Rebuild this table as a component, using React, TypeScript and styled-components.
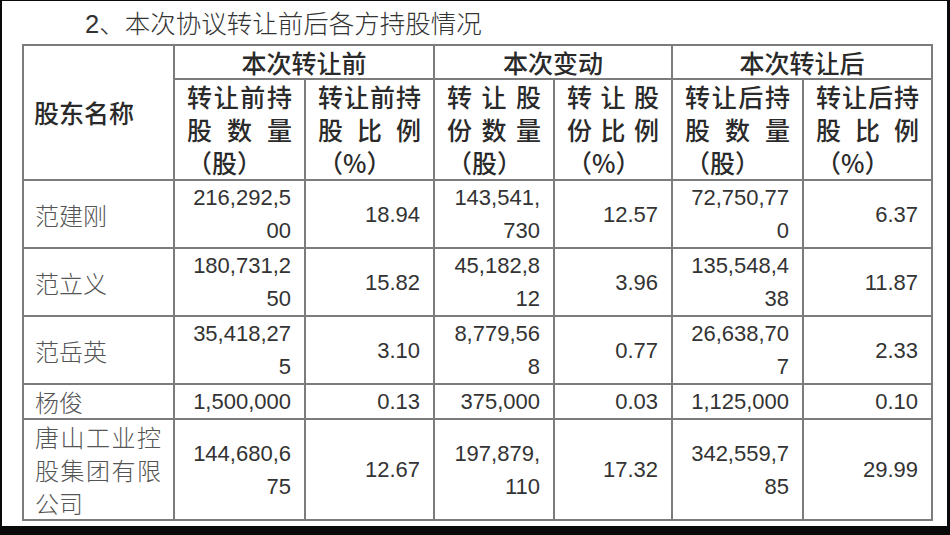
import React from "react";
import styled, { createGlobalStyle } from "styled-components";

const GlobalStyle = createGlobalStyle`
  html, body { margin: 0; padding: 0; background: #ffffff; }
  #root { width: 950px; height: 535px; }
`;

const Frame = styled.div`
  box-sizing: border-box;
  width: 950px;
  height: 535px;
  background: #ffffff;
  border-style: solid;
  border-color: #0a0a0a;
  border-width: 1px 3px 9px 2px;
  padding: 5px 0 0 20px;
  font-family: "Liberation Sans", "Noto Sans CJK SC", sans-serif;
`;

const Title = styled.div`
  height: 36px;
  line-height: 36px;
  padding-left: 63px;
  font-size: 25.5px;
  font-weight: 300;
  color: #333333;
  margin-bottom: 2px;
`;

const Table = styled.table`
  table-layout: fixed;
  border-collapse: collapse;
  width: 909px;
  border: 2px solid #7c7c7c;
`;

const Cell = styled.td`
  border: 2px solid #7c7c7c;
  padding: 0 13px;
  line-height: 33px;
  vertical-align: middle;
  text-align: right;
  font-size: 22px;
  color: #333333;
  font-family: "Liberation Sans", "Noto Sans CJK SC", sans-serif;
  white-space: nowrap;
`;

const HeadCell = styled.th<{ $align?: "left" | "center" | "justify"; $short?: boolean }>`
  border: 2px solid #7c7c7c;
  padding: ${(p) => (p.$align === "left" ? "0 10px 0 10px" : "0 12px")};
  line-height: ${(p) => (p.$short ? "32px" : "33px")};
  vertical-align: middle;
  text-align: ${(p) => p.$align ?? "justify"};
  font-size: 25px;
  font-weight: 500;
  color: #2a2a2a;
  font-family: "Noto Sans CJK SC", "Liberation Sans", sans-serif;
`;

const NameCell = styled.td`
  border: 2px solid #7c7c7c;
  padding: 0 12px 0 11px;
  line-height: 33px;
  vertical-align: middle;
  text-align: justify;
  font-size: 24px;
  color: #555555;
  font-family: "Noto Sans CJK SC", sans-serif;
  font-weight: 300;
`;

const Line = styled.div`
  display: block;
`;

const widths = [151, 131, 129, 120, 118, 131, 129];

type Row = {
  name: string;
  before: string[];
  beforePct: string;
  change: string[];
  changePct: string;
  after: string[];
  afterPct: string;
};

const rows: Row[] = [
  { name: "范建刚", before: ["216,292,5", "00"], beforePct: "18.94", change: ["143,541,", "730"], changePct: "12.57", after: ["72,750,77", "0"], afterPct: "6.37" },
  { name: "范立义", before: ["180,731,2", "50"], beforePct: "15.82", change: ["45,182,8", "12"], changePct: "3.96", after: ["135,548,4", "38"], afterPct: "11.87" },
  { name: "范岳英", before: ["35,418,27", "5"], beforePct: "3.10", change: ["8,779,56", "8"], changePct: "0.77", after: ["26,638,70", "7"], afterPct: "2.33" },
  { name: "杨俊", before: ["1,500,000"], beforePct: "0.13", change: ["375,000"], changePct: "0.03", after: ["1,125,000"], afterPct: "0.10" },
  { name: "唐山工业控股集团有限公司", before: ["144,680,6", "75"], beforePct: "12.67", change: ["197,879,", "110"], changePct: "17.32", after: ["342,559,7", "85"], afterPct: "29.99" },
];

const Num = ({ lines }: { lines: string[] }) => (
  <Cell>
    {lines.map((l, i) => (
      <Line key={i}>{l}</Line>
    ))}
  </Cell>
);

export default function App() {
  return (
    <>
      <GlobalStyle />
      <Frame>
        <Title>2、本次协议转让前后各方持股情况</Title>
        <Table>
          <colgroup>
            {widths.map((w, i) => (
              <col key={i} style={{ width: w }} />
            ))}
          </colgroup>
          <thead>
            <tr>
              <HeadCell rowSpan={2} $align="left">股东名称</HeadCell>
              <HeadCell colSpan={2} $align="center" $short>本次转让前</HeadCell>
              <HeadCell colSpan={2} $align="center" $short>本次变动</HeadCell>
              <HeadCell colSpan={2} $align="center" $short>本次转让后</HeadCell>
            </tr>
            <tr>
              <HeadCell>转让前持股数量（股）</HeadCell>
              <HeadCell>转让前持股比例（%）</HeadCell>
              <HeadCell>转让股份数量（股）</HeadCell>
              <HeadCell>转让股份比例（%）</HeadCell>
              <HeadCell>转让后持股数量（股）</HeadCell>
              <HeadCell>转让后持股比例（%）</HeadCell>
            </tr>
          </thead>
          <tbody>
            {rows.map((r) => (
              <tr key={r.name}>
                <NameCell>{r.name}</NameCell>
                <Num lines={r.before} />
                <Cell>{r.beforePct}</Cell>
                <Num lines={r.change} />
                <Cell>{r.changePct}</Cell>
                <Num lines={r.after} />
                <Cell>{r.afterPct}</Cell>
              </tr>
            ))}
          </tbody>
        </Table>
      </Frame>
    </>
  );
}
